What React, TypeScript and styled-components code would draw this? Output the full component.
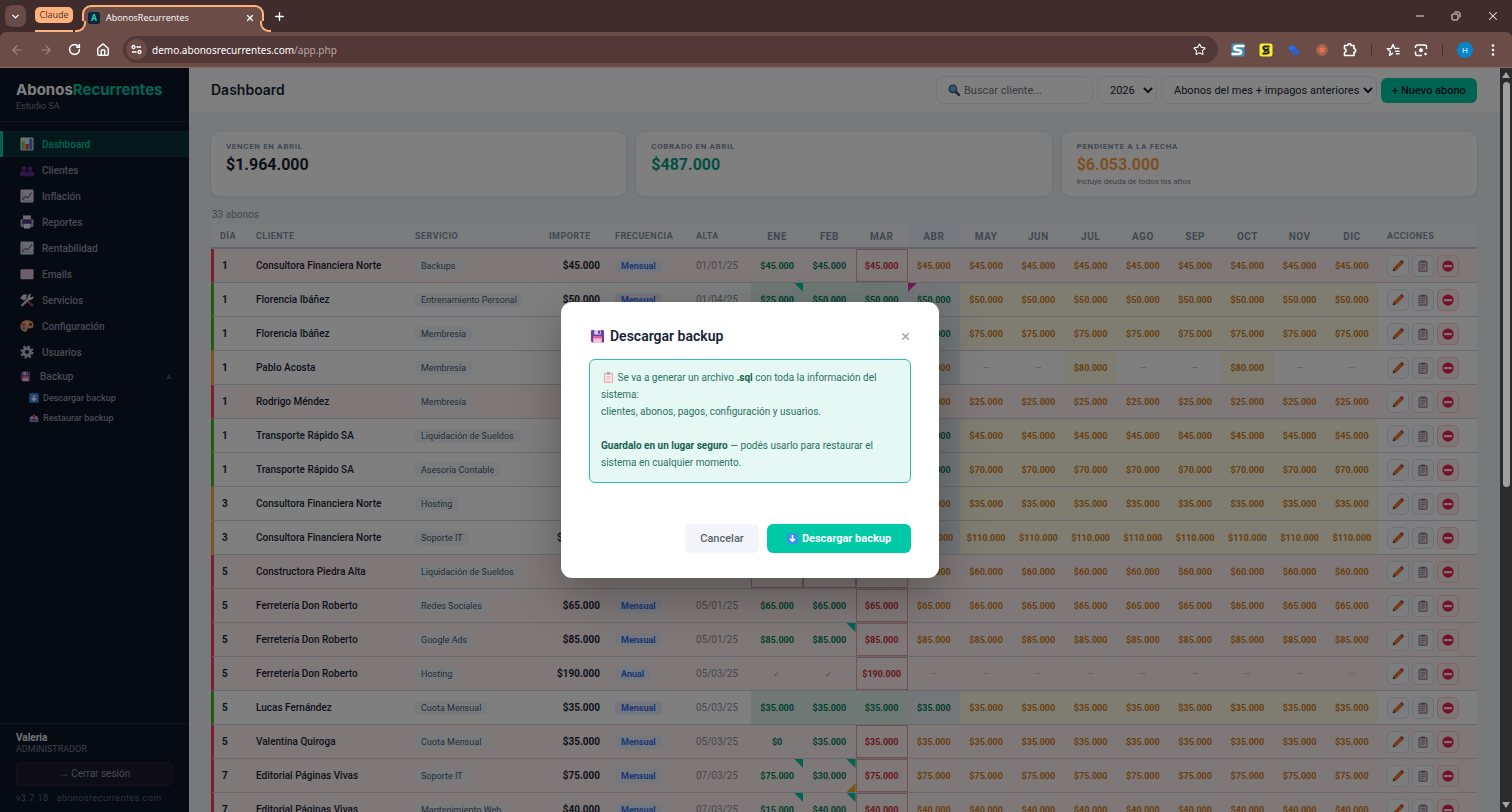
import React from "react";
import styled, { createGlobalStyle, css } from "styled-components";
import {
  ArrowLeft,
  ArrowRight,
  ChevronDown,
  House,
  Minus,
  Plus,
  RotateCw,
  Star,
  X,
} from "lucide-react";

const ui = `Roboto, "Liberation Sans", sans-serif`;
const display = `Inter, "Liberation Sans", sans-serif`;
const chrome = `"Open Sans", "Noto Sans", sans-serif`;

const GlobalStyle = createGlobalStyle`
  * { box-sizing: border-box; }
  body { margin: 0; font-family: ${ui}; font-size: 10px; color: #1a1f36; background: #f0f2f7; }
  button, input, select { font-family: inherit; margin: 0; }
`;

/* ---------- Browser frame ---------- */

const Frame = styled.div`
  height: 100vh;
  display: flex;
  flex-direction: column;
  overflow: hidden;
`;

const TabStrip = styled.div`
  height: 32px;
  flex: none;
  display: flex;
  align-items: center;
  background: #402c2c;
  color: #fff;
  font-family: ${chrome};
  padding-left: 5px;
`;

const TabSearch = styled.button`
  width: 21px;
  height: 22px;
  border: 0;
  border-radius: 7px;
  background: #684a47;
  color: #fff;
  padding: 0;
  display: grid;
  place-items: center;
`;

const TabGroup = styled.div`
  align-self: stretch;
  display: flex;
  align-items: center;
  margin-left: 9px;
  width: 38px;
  border-bottom: 2px solid #ffb27c;
`;

const GroupChip = styled.button`
  height: 16px;
  width: 38px;
  border: 0;
  border-radius: 5px;
  padding: 0;
  background: #ffb27c;
  color: #55332c;
  font-size: 9px;
  line-height: 16px;
`;

const Tab = styled.div`
  position: relative;
  align-self: stretch;
  display: flex;
  align-items: center;
  gap: 6px;
  width: 182px;
  margin: 5px 0 0 9px;
  padding: 0 7px 4px 4px;
  border: 2px solid #ffb27c;
  border-bottom: 0;
  border-radius: 9px 9px 0 0;
  background: #6b4c47;
  font-size: 9px;
  line-height: 14px;

  &::before,
  &::after {
    content: "";
    position: absolute;
    bottom: 0;
    width: 9px;
    height: 9px;
    border-bottom: 2px solid #ffb27c;
    background: #402c2c;
  }
  &::before {
    left: -9px;
    border-right: 2px solid #ffb27c;
    border-bottom-right-radius: 9px;
    box-shadow: 3px 3px 0 #6b4c47;
  }
  &::after {
    right: -9px;
    border-left: 2px solid #ffb27c;
    border-bottom-left-radius: 9px;
    box-shadow: -3px 3px 0 #6b4c47;
  }
`;

const TabTitle = styled.span`
  flex: 1;
`;

const Favicon = styled.span`
  width: 12px;
  height: 12px;
  border-radius: 2px;
  background: #10243c;
  color: #22d3ae;
  font: 700 9px/12px ${ui};
  text-align: center;
`;

const BareButton = styled.button`
  border: 0;
  padding: 0;
  background: none;
  color: inherit;
  display: grid;
  place-items: center;
`;

const NewTab = styled(BareButton)`
  margin-left: 9px;
`;

const WindowButtons = styled.div`
  margin-left: auto;
  display: flex;
  gap: 24px;
  padding-right: 12px;
  color: #f1e4e2;
`;

const ToolbarBack = styled.div`
  background: #402c2c;
  flex: none;
`;

const Toolbar = styled.div`
  height: 36px;
  display: flex;
  align-items: center;
  background: #6b4c47;
  border-bottom: 1px solid #876660;
  border-radius: 6px 6px 0 0;
  color: #fff;
  font-family: ${chrome};
  padding: 0 13px 0 10px;
`;

const NavButtons = styled.div`
  display: flex;
  gap: 15px;
  margin-right: 13px;
`;

const NavButton = styled(BareButton)<{ $muted?: boolean }>`
  color: ${(p) => (p.$muted ? "#a58a86" : "#fff")};
`;

const AddressBar = styled.div`
  flex: 1;
  height: 27px;
  display: flex;
  align-items: center;
  border-radius: 14px;
  background: #523837;
  padding: 0 12px 0 3px;
`;

const SiteInfo = styled(BareButton)`
  width: 21px;
  height: 21px;
  border-radius: 50%;
  background: #6b4c47;
  margin-right: 5px;
`;

const Address = styled.div`
  flex: 1;
  font-family: "Noto Sans", sans-serif;
  font-size: 10px;
  line-height: 16px;
  span { color: #bda9a6; }
`;

const Extensions = styled.div`
  display: flex;
  align-items: center;
  gap: 14px;
  padding-left: 13px;
`;

const Divider = styled.span`
  width: 1px;
  height: 12px;
  background: #4a3230;
`;

const Avatar = styled(BareButton)`
  width: 16px;
  height: 16px;
  border-radius: 50%;
  background: #0a84c8;
  font-size: 8px;
`;

/* ---------- Application shell ---------- */

const Body = styled.div`
  flex: 1;
  min-height: 0;
  display: flex;
`;

const Viewport = styled.div`
  position: relative;
  flex: 1;
  min-width: 0;
  display: flex;
  overflow: hidden;
`;

const ScrollRail = styled.div`
  width: 12px;
  flex: none;
  display: flex;
  flex-direction: column;
  align-items: center;
  background: #2b2b2b;
  padding: 4px 0;
`;

const ScrollThumb = styled.div`
  width: 7px;
  height: 55%;
  margin-top: 4px;
  border-radius: 4px;
  background: #9f9f9f;
`;

const ScrollArrow = styled.span<{ $down?: boolean }>`
  border: 4px solid transparent;
  ${(p) =>
    p.$down
      ? "margin-top: auto; border-top: 6px solid #a5a5a5; border-bottom: 0;"
      : "border-bottom: 6px solid #a5a5a5; border-top: 0;"}
`;

const Sidebar = styled.aside`
  width: 189px;
  flex: none;
  display: flex;
  flex-direction: column;
  background: #0d1627;
  color: #8d97ab;
`;

const Brand = styled.div`
  padding: 13px 16px 9px;
  border-bottom: 1px solid #1d283a;
  height: 54px;
`;

const BrandName = styled.div`
  font: 700 15px/18px ${display};
  color: #fff;
  span { color: #00c9a7; }
`;

const BrandSub = styled.div`
  font-size: 9px;
  line-height: 14px;
  color: #768196;
`;

const Nav = styled.nav`
  flex: 1;
  padding-top: 9px;
`;

const navText = css`
  font-size: 10px;
  font-weight: 500;
  color: inherit;
  text-decoration: none;
`;

const NavLink = styled.a<{ $active?: boolean }>`
  ${navText}
  height: 26px;
  display: flex;
  align-items: center;
  gap: 8px;
  padding-left: 17px;
  border-left: 3px solid ${(p) => (p.$active ? "#00c9a7" : "transparent")};
  ${(p) => p.$active && "background: #0b3138; color: #00c9a7;"}
`;

const NavGroup = styled.button`
  ${navText}
  width: 100%;
  height: 22px;
  border: 0;
  background: none;
  display: flex;
  align-items: center;
  gap: 9px;
  padding: 0 17px 0 20px;
`;

const NavGroupLabel = styled.span`
  flex: 1;
  text-align: left;
`;

const NavCaret = styled.span`
  border: 3px solid transparent;
  border-bottom: 5px solid #3c475b;
  border-top: 0;
`;

const SubNav = styled.div`
  padding: 1px 0 3px 29px;
  background: #0b1322;
`;

const SubLink = styled.a`
  ${navText}
  font-size: 9px;
  height: 20px;
  display: flex;
  align-items: center;
  gap: 4px;
`;

const Account = styled.div`
  border-top: 1px solid #1d283a;
  padding: 8px 16px 7px;
`;

const AccountName = styled.div`
  font-size: 10px;
  line-height: 12px;
  font-weight: 700;
  color: #e4e8f0;
`;

const AccountRole = styled.div`
  font-size: 9px;
  line-height: 11px;
  color: #768196;
`;

const Logout = styled.button`
  width: 100%;
  height: 24px;
  margin: 7px 0 6px;
  border: 1px solid #2a2434;
  border-radius: 5px;
  background: #1c1928;
  color: #8d97ab;
  font-size: 10px;
  line-height: 12px;
`;

const Version = styled.div`
  font-size: 9px;
  line-height: 13px;
  letter-spacing: 0.05em;
  color: #5c667a;
`;

/* ---------- Dashboard ---------- */

const Main = styled.main`
  flex: 1;
  min-width: 0;
  display: flex;
  flex-direction: column;
  background: #f0f2f5;
`;

const TopBar = styled.header`
  height: 45px;
  flex: none;
  display: flex;
  align-items: center;
  gap: 4px;
  padding: 0 23px 0 22px;
  background: #fff;
  border-bottom: 1px solid #f0f2f5;
`;

const PageTitle = styled.h1`
  flex: 1;
  margin: 0;
  font: 600 14px/20px ${display};
`;

const field = css`
  height: 28px;
  border: 1px solid #e9ebf1;
  border-radius: 8px;
  background: #fff;
  color: #1a1f36;
  font-size: 11px;
`;

const Search = styled.label`
  ${field}
  display: flex;
  align-items: center;
  gap: 4px;
  width: 157px;
  padding-left: 11px;
  input {
    border: 0;
    outline: 0;
    padding: 0;
    min-width: 0;
    flex: 1;
    background: none;
    font-size: 11px;
  }
  input::placeholder { color: #757575; opacity: 1; }
`;

const Select = styled.select<{ $wide?: boolean }>`
  ${field}
  width: ${(p) => (p.$wide ? 216 : 60)}px;
  padding-left: 8px;
`;

const Primary = styled.button<{ $large?: boolean }>`
  border: 0;
  background: #00c9a7;
  font-size: 11px;
  border-radius: 6px;
  ${(p) =>
    p.$large
      ? "height: 29px; width: 144px; color: #fff; font-weight: 700; display: flex; align-items: center; justify-content: center; gap: 4px;"
      : "height: 25px; width: 96px; color: #0d1627; font-weight: 500; padding: 0;"}
`;

const Content = styled.div`
  flex: 1;
  min-height: 0;
  overflow: hidden;
  padding: 19px 23px 0 22px;
`;

const Cards = styled.section`
  display: grid;
  grid-template-columns: repeat(3, 1fr);
  gap: 10px;
`;

const Card = styled.div`
  height: 64px;
  padding: 10px 15px;
  border-radius: 9px;
  background: #fff;
  box-shadow: 0 1px 4px rgba(20, 30, 60, 0.08);
`;

const CardLabel = styled.div`
  font-size: 8px;
  line-height: 10px;
  font-weight: 700;
  letter-spacing: 0.08em;
  color: #848ea3;
`;

const CardValue = styled.div<{ $color: string }>`
  margin-top: 3px;
  font-size: 16px;
  line-height: 20px;
  font-weight: 700;
  color: ${(p) => p.$color};
`;

const CardNote = styled.div`
  font-size: 8px;
  line-height: 13px;
  color: #7b8290;
`;

const Count = styled.p`
  margin: 12px 0 3px 1px;
  font-size: 10px;
  line-height: 14px;
  color: #8a8f9c;
`;

const Table = styled.table`
  width: 100%;
  table-layout: fixed;
  border-collapse: separate;
  border-spacing: 0;
  background: #fff;
  border-radius: 8px 8px 0 0;
`;

const Th = styled.th<{ $month?: boolean; $current?: boolean }>`
  height: 24px;
  padding: 0 0 0 9px;
  text-align: left;
  font-size: 9px;
  font-weight: 700;
  letter-spacing: 0.05em;
  color: #848ea3;
  background: #f7f9fb;
  border-bottom: 2px solid #cbcdda;
  &:first-child { border-top-left-radius: 8px; }
  &:last-child { border-top-right-radius: 8px; }
  ${(p) => p.$month && "padding: 0; text-align: center; font-size: 10px;"}
  ${(p) => p.$current && "background: #edf3fd;"}
`;

type Status = "late" | "ok" | "due";
const edge: Record<Status, string> = { late: "#ff3d5e", ok: "#46b81c", due: "#ffa640" };

const Tr = styled.tr<{ $status: Status }>`
  background: ${(p) => (p.$status === "late" ? "#fff0f0" : "#fff")};
  td:first-child { border-left: 3px solid ${(p) => edge[p.$status]}; }
`;

const Td = styled.td`
  height: 34px;
  padding: 0 0 0 9px;
  border-bottom: 1px solid #d0d2da;
  font-size: 10px;
  font-weight: 500;
  white-space: nowrap;
`;

const DayTd = styled(Td)`
  padding-left: 8px;
  font-weight: 700;
`;

const AmountTd = styled(Td)`
  padding: 0 6px 0 0;
  text-align: right;
  font-weight: 700;
`;

const DateTd = styled(Td)`
  font-weight: 400;
  color: #8a8f9c;
`;

type Kind = "paid" | "pending" | "overdue" | "none" | "check";
const monthColor: Record<Kind, string> = {
  paid: "#04805a",
  pending: "#d07f1e",
  overdue: "#cc2f3c",
  none: "#b8bcc6",
  check: "#9aa0ac",
};

const MonthTd = styled(Td)<{ $kind: Kind; $tinted: boolean; $current: boolean }>`
  position: relative;
  padding: 0;
  text-align: center;
  font-size: 9px;
  font-weight: ${(p) => (p.$kind === "none" || p.$kind === "check" ? 400 : 700)};
  color: ${(p) => monthColor[p.$kind]};
  ${(p) => p.$tinted && p.$kind === "paid" && "background: #dcf3ec;"}
  ${(p) => p.$tinted && p.$kind === "pending" && "background: #fff9e2;"}
  ${(p) => p.$tinted && p.$current && "background: #e6eef5;"}
  ${(p) => p.$kind === "overdue" && "box-shadow: inset 0 0 0 1px #e5a3a9;"}
`;

const Corner = styled.span<{ $at: "tr" | "tl" | "br" }>`
  position: absolute;
  width: 9px;
  height: 9px;
  ${(p) =>
    ({
      tr: "top: 0; right: 0; background: #00c9a7; clip-path: polygon(0 0, 100% 0, 100% 100%);",
      tl: "top: 0; left: 0; background: #f02fa0; clip-path: polygon(0 0, 100% 0, 0 100%);",
      br: "bottom: 0; right: 0; background: #f7a823; clip-path: polygon(100% 0, 100% 100%, 0 100%);",
    })[p.$at]}
`;

const Tag = styled.span<{ $blue?: boolean }>`
  display: inline-block;
  padding: 0 6px;
  border-radius: 4px;
  font-size: 9px;
  line-height: 14px;
  background: ${(p) => (p.$blue ? "#e9f0fd" : "#f1f4f8")};
  color: ${(p) => (p.$blue ? "#2f6fed" : "#4c5870")};
  font-weight: ${(p) => (p.$blue ? 700 : 400)};
`;

const Actions = styled.div`
  display: flex;
  gap: 3px;
`;

const IconButton = styled.button<{ $danger?: boolean }>`
  width: 22px;
  height: 22px;
  padding: 0;
  display: grid;
  place-items: center;
  border-radius: 5px;
  border: 1px solid ${(p) => (p.$danger ? "#f6c6ce" : "#dde3ec")};
  background: ${(p) => (p.$danger ? "#fdeef0" : "#f8fafc")};
`;

/* ---------- Backup dialog ---------- */

const Overlay = styled.div`
  position: absolute;
  inset: 0;
  display: grid;
  place-items: center;
  background: rgba(0, 0, 0, 0.5);
`;

const Dialog = styled.div`
  width: 378px;
  padding: 24px 28px 25px;
  border-radius: 11px;
  background: #fff;
  box-shadow: 0 16px 47px rgba(0, 0, 0, 0.3);
`;

const DialogHead = styled.div`
  display: flex;
  align-items: center;
  gap: 5px;
  height: 20px;
  padding-left: 1px;
`;

const DialogTitle = styled.h2`
  flex: 1;
  margin: 0;
  font-size: 14px;
  line-height: 20px;
  font-weight: 600;
`;

const Close = styled(BareButton)`
  width: 11px;
  color: #a5abb6;
`;

const Notice = styled.div`
  margin-top: 13px;
  padding: 9px 11px 11px;
  border: 1px solid #2cc0a4;
  border-radius: 6px;
  background: #e6f8f4;
  color: #2a7262;
  font-size: 10px;
  line-height: 17px;
  svg { vertical-align: -2px; margin: 0 1px 0 2px; }
  strong { color: #17604f; }
`;

const DialogActions = styled.div`
  display: flex;
  justify-content: flex-end;
  gap: 8px;
  margin-top: 41px;
`;

const Cancel = styled.button`
  width: 74px;
  height: 29px;
  border: 0;
  border-radius: 6px;
  background: #f4f5fa;
  color: #5a6072;
  font-size: 11px;
  font-weight: 500;
`;

/* ---------- Pictograms ---------- */

type GlyphName =
  | "bars" | "people" | "trend" | "printer" | "mail" | "tools" | "palette" | "gear"
  | "floppy" | "download" | "outbox" | "pencil" | "clipboard" | "stop" | "lens";

const glyphs: Record<GlyphName, React.ReactNode> = {
  bars: (
    <>
      <rect x="0.5" y="0.5" width="15" height="15" rx="1.5" fill="#e6e0ee" />
      <rect x="2" y="5" width="3.6" height="9.5" fill="#7bc74d" />
      <rect x="6.3" y="8" width="3.6" height="6.5" fill="#e8384f" />
      <rect x="10.6" y="2" width="3.6" height="12.5" fill="#2f7fe0" />
    </>
  ),
  people: (
    <g fill="#5b2f8c">
      <circle cx="4.6" cy="6.5" r="2.7" />
      <circle cx="11.4" cy="6.5" r="2.7" />
      <path d="M0 15v-2.500a3 3 0 0 1 3-3h3a2.600 2.600 0 0 1 2 1 2.600 2.600 0 0 1 2-1h3a3 3 0 0 1 3 3V15z" />
    </g>
  ),
  trend: (
    <>
      <rect x="0.5" y="0.5" width="15" height="15" rx="1.5" fill="#d7d3df" />
      <path d="M3 3v10h10.5" fill="none" stroke="#a6a2b4" strokeWidth="1" />
      <path d="M2.5 12.5l4-4 2.5 1.5 4.5-6" fill="none" stroke="#5e6470" strokeWidth="1.4" />
    </>
  ),
  printer: (
    <>
      <rect x="0.5" y="4.500" width="15" height="9.500" rx="2" fill="#aaa4c4" />
      <rect x="3.5" y="0.5" width="9" height="6" fill="#d9d4ea" />
      <rect x="2.800" y="5" width="10.400" height="5.500" fill="#4c3a86" />
      <rect x="4.500" y="10" width="7" height="5.500" fill="#e9e4f5" />
    </>
  ),
  mail: (
    <>
      <rect x="0.5" y="2.5" width="15" height="11.5" rx="1.2" fill="#dcbfd3" />
      <path d="M1 3.5l7 5 7-5" fill="none" stroke="#d0b0c6" />
    </>
  ),
  tools: (
    <>
      <path d="M6 6l8 8.500" stroke="#8b4a52" strokeWidth="2.800" strokeLinecap="round" />
      <path d="M0.500 5.500L4 1.500l4.500.5L7 4l1 1-3.500 3.500L3 7 1.800 7.500z" fill="#d7d6de" />
      <path d="M2.500 14L11 5.500" stroke="#d0cfd8" strokeWidth="2.800" strokeLinecap="round" />
      <path d="M13 .8a4 4 0 0 0-4 5.200l2.200 2A4 4 0 0 0 15.500 3.500L13 5.500 11.200 3.800z" fill="#dfdee6" />
    </>
  ),
  palette: (
    <>
      <path d="M8 1.500C3.500 1.500.5 4.500.5 8.500s3 6 6 6c2 0 1-2.500 2.500-3.500s6.500 1 6.500-3.500-3-6-7.500-6z" fill="#e39a78" />
      <circle cx="4" cy="6.500" r="1.500" fill="#d23b45" />
      <circle cx="8" cy="4.300" r="1.500" fill="#f3d34a" />
      <circle cx="12" cy="6.500" r="1.600" fill="#3b2a36" />
      <circle cx="4.300" cy="10.500" r="1.500" fill="#3b7bd6" />
    </>
  ),
  gear: (
    <>
      <circle cx="8" cy="8" r="6.300" fill="none" stroke="#bfbcca" strokeWidth="2.600" strokeDasharray="2.600 2.340" />
      <circle cx="8" cy="8" r="4" fill="none" stroke="#bfbcca" strokeWidth="3.200" />
    </>
  ),
  floppy: (
    <>
      <path d="M1 2.500A1.500 1.500 0 0 1 2.500 1h11A1.500 1.500 0 0 1 15 2.500v12H2.500L1 13z" fill="#6b3fa0" />
      <rect x="4.500" y="1" width="7" height="5" fill="#d9c9ee" />
      <rect x="8.700" y="1.800" width="1.800" height="3.200" fill="#4a2a78" />
      <rect x="3.500" y="8" width="9" height="7" fill="#fbc3d8" />
      <rect x="3.500" y="8" width="9" height="2" fill="#e35a94" />
    </>
  ),
  download: (
    <>
      <rect x="0.500" y="0.500" width="15" height="15" rx="2" fill="#3f8ff0" />
      <path d="M8 3v9M4.500 8.500L8 12l3.500-3.500" fill="none" stroke="#fff" strokeWidth="2.200" />
    </>
  ),
  outbox: (
    <>
      <path d="M1 8h14v6.500H1z" fill="#8a86c8" />
      <path d="M3 5h10l2 4H1z" fill="#c9c5e6" />
      <path d="M8 1l3.500 4H9.500v4h-3V5h-2z" fill="#d8434f" />
      <path d="M4.500 10h7v2h-7z" fill="#4d4796" />
    </>
  ),
  pencil: (
    <>
      <path d="M1 15l1.200-4.800L10.500 2l3.500 3.500L5.800 13.800z" fill="#e8782c" />
      <path d="M10.500 2l1.400-1.400a1.500 1.500 0 0 1 2.100 0l1.400 1.400a1.500 1.500 0 0 1 0 2.100L14 5.500z" fill="#cf4558" />
      <path d="M1 15l.9-3.600 2.700 2.700z" fill="#5e3a2c" />
    </>
  ),
  clipboard: (
    <>
      <rect x="2" y="1.500" width="12" height="14" rx="1" fill="#a57f8b" />
      <rect x="3.500" y="3" width="9" height="11" fill="#ded5e2" />
      <rect x="5" y="0.500" width="6" height="3" rx="0.800" fill="#7d7d90" />
      <path d="M5 6h6M5 8.500h6M5 11h4" stroke="#8d84a0" strokeWidth="1.200" />
    </>
  ),
  stop: (
    <>
      <circle cx="8" cy="8" r="7.500" fill="#ee1f4f" />
      <rect x="2.700" y="6.500" width="10.600" height="3" rx="0.600" fill="#f4ecf2" />
    </>
  ),
  lens: (
    <>
      <path d="M9.500 9.500l5 5" stroke="#3b4154" strokeWidth="3" strokeLinecap="round" />
      <circle cx="6.500" cy="6.500" r="5" fill="#4fb4e6" stroke="#4d5568" strokeWidth="1.600" />
    </>
  ),
};

const Glyph = ({ name, size = 13 }: { name: GlyphName; size?: number }) => (
  <svg width={size} height={size} viewBox="0 0 16 16" aria-hidden="true">
    {glyphs[name]}
  </svg>
);

const PinkClipboard = () => (
  <svg width="11" height="11" viewBox="0 0 16 16" aria-hidden="true">
    <rect x="1.500" y="1.500" width="13" height="14" rx="1" fill="#eaa7a4" />
    <rect x="3" y="3" width="10" height="11" fill="#fbe9ec" />
    <rect x="5" y="0.500" width="6" height="3" rx="0.800" fill="#b59aa8" />
    <path d="M5 6.500h6M5 9h6M5 11.500h4" stroke="#d9a5b4" />
  </svg>
);

const ExtIcons = () => (
  <>
    <svg width="14" height="14" viewBox="0 0 14 14" aria-hidden="true">
      <rect x="0.500" y="0.500" width="13" height="13" rx="1" fill="#3f8fb8" />
      <path d="M13.500 3H6Q3.500 3 3.500 5T6.500 7t3.500 2-2.500 2H.5" fill="none" stroke="#fff" strokeWidth="2.600" />
    </svg>
    <svg width="14" height="14" viewBox="0 0 14 14" aria-hidden="true">
      <rect x="0.500" y="0.500" width="13" height="13" rx="2" fill="#f7ea2e" />
      <path d="M10.500 3.500H6Q3.500 3.700 4.500 5.700l5 2.400Q10.500 10.300 8 10.500H3.500M5 8.500l5-3" fill="none" stroke="#1c1c10" strokeWidth="1.800" />
    </svg>
    <svg width="14" height="14" viewBox="0 0 14 14" aria-hidden="true">
      <path d="M2 4l3.500-2.500L9 4.500v3l-3 1.500-4-2z" fill="#2f6be0" />
      <path d="M5.500 6.500L9 5l3.500 3-2 4-4 .3-2-3z" fill="#2a5fce" />
    </svg>
    <svg width="14" height="14" viewBox="0 0 14 14" aria-hidden="true">
      <path
        d="M7 1v12M1 7h12M2.700 2.700l8.600 8.600M11.300 2.700l-8.600 8.600M4.700 1.500l4.600 11M9.300 1.500l-4.600 11M1.500 4.700l11 4.600M1.500 9.300l11-4.600"
        stroke="#e07a50"
        strokeWidth="1"
      />
    </svg>
  </>
);

/* ---------- Data ---------- */

const MONTHS = ["ENE", "FEB", "MAR", "ABR", "MAY", "JUN", "JUL", "AGO", "SEP", "OCT", "NOV", "DIC"];
const CURRENT = 3;

interface Row {
  day: number;
  client: string;
  service: string;
  amount: string;
  freq: string;
  since: string;
  status: Status;
  /* One letter per month: p paid, y pending, r overdue, n none, c covered */
  plan: string;
  override?: Record<number, string>;
  corners?: [number, "tr" | "tl" | "br"][];
}

const row = (
  day: number, client: string, service: string, amount: string, since: string,
  status: Status, plan: string, extra: Partial<Row> = {},
): Row => ({ day, client, service, amount, since, status, plan, freq: "Mensual", ...extra });

const LATE = "ppryyyyyyyyy";
const OK = "ppppyyyyyyyy";
const DUE = "pppyyyyyyyyy";

const ROWS: Row[] = [
  row(1, "Consultora Financiera Norte", "Backups", "$45.000", "01/01/25", "late", LATE),
  row(1, "Florencia Ibáñez", "Entrenamiento Personal", "$50.000", "01/04/25", "ok", OK, {
    override: { 0: "$25.000" },
    corners: [[0, "tr"], [3, "tl"]],
  }),
  row(1, "Florencia Ibáñez", "Membresía", "$75.000", "01/04/25", "ok", OK),
  row(1, "Pablo Acosta", "Membresía", "$80.000", "01/01/25", "due", "pnnynnynnynn", { freq: "Trimestral" }),
  row(1, "Rodrigo Méndez", "Membresía", "$25.000", "01/01/25", "late", LATE),
  row(1, "Transporte Rápido SA", "Liquidación de Sueldos", "$45.000", "01/01/25", "ok", OK),
  row(1, "Transporte Rápido SA", "Asesoría Contable", "$70.000", "01/01/25", "ok", OK),
  row(3, "Consultora Financiera Norte", "Hosting", "$35.000", "03/01/25", "due", DUE),
  row(3, "Consultora Financiera Norte", "Soporte IT", "$110.000", "03/01/25", "due", DUE),
  row(5, "Constructora Piedra Alta", "Liquidación de Sueldos", "$60.000", "05/01/25", "late", "rrryyyyyyyyy"),
  row(5, "Ferretería Don Roberto", "Redes Sociales", "$65.000", "05/01/25", "late", LATE),
  row(5, "Ferretería Don Roberto", "Google Ads", "$85.000", "05/01/25", "late", LATE, { corners: [[1, "tr"]] }),
  row(5, "Ferretería Don Roberto", "Hosting", "$190.000", "05/03/25", "late", "ccrnnnnnnnnn", { freq: "Anual" }),
  row(5, "Lucas Fernández", "Cuota Mensual", "$35.000", "05/03/25", "ok", OK),
  row(5, "Valentina Quiroga", "Cuota Mensual", "$35.000", "05/03/25", "late", LATE, { override: { 0: "$0" } }),
  row(7, "Editorial Páginas Vivas", "Soporte IT", "$75.000", "07/03/25", "late", LATE, {
    override: { 1: "$30.000" },
    corners: [[0, "tr"], [1, "tr"], [1, "br"]],
  }),
  row(7, "Editorial Páginas Vivas", "Mantenimiento Web", "$40.000", "07/03/25", "late", LATE, {
    override: { 0: "$15.000" },
    corners: [[0, "tr"], [1, "tr"]],
  }),
];

const KINDS: Record<string, Kind> = { p: "paid", y: "pending", r: "overdue", n: "none", c: "check" };

const NAV: [GlyphName, string][] = [
  ["bars", "Dashboard"],
  ["people", "Clientes"],
  ["trend", "Inflación"],
  ["printer", "Reportes"],
  ["trend", "Rentabilidad"],
  ["mail", "Emails"],
  ["tools", "Servicios"],
  ["palette", "Configuración"],
  ["gear", "Usuarios"],
];

/* ---------- Sections ---------- */

const BrowserTop = () => (
  <>
    <TabStrip>
      <TabSearch aria-label="Buscar pestañas"><ChevronDown size={11} strokeWidth={3} /></TabSearch>
      <TabGroup><GroupChip>Claude</GroupChip></TabGroup>
      <Tab>
        <Favicon>A</Favicon>
        <TabTitle>AbonosRecurrentes</TabTitle>
        <BareButton aria-label="Cerrar pestaña"><X size={10} strokeWidth={3} /></BareButton>
      </Tab>
      <NewTab aria-label="Nueva pestaña"><Plus size={13} strokeWidth={2.5} /></NewTab>
      <WindowButtons>
        <BareButton aria-label="Minimizar"><Minus size={12} /></BareButton>
        <BareButton aria-label="Restaurar">
          <svg width="12" height="12" viewBox="0 0 12 12" fill="none" stroke="currentColor" aria-hidden="true">
            <rect x="2" y="4" width="6" height="6" rx="1" />
            <path d="M4.500 2h4A1.500 1.500 0 0 1 10 3.500v4" />
          </svg>
        </BareButton>
        <BareButton aria-label="Cerrar"><X size={14} strokeWidth={1.8} /></BareButton>
      </WindowButtons>
    </TabStrip>
    <ToolbarBack>
      <Toolbar>
        <NavButtons>
          <NavButton $muted aria-label="Atrás"><ArrowLeft size={14} /></NavButton>
          <NavButton $muted aria-label="Adelante"><ArrowRight size={14} /></NavButton>
          <NavButton aria-label="Recargar"><RotateCw size={13} strokeWidth={2.8} /></NavButton>
          <NavButton aria-label="Inicio"><House size={14} strokeWidth={2.5} /></NavButton>
        </NavButtons>
        <AddressBar>
          <SiteInfo aria-label="Información del sitio">
            <svg width="11" height="11" viewBox="0 0 11 11" fill="none" stroke="#fff" strokeWidth="1.300" aria-hidden="true">
              <circle cx="2.500" cy="3" r="1.500" />
              <path d="M5.500 3H10M1 8h4.500" />
              <circle cx="8.500" cy="8" r="1.500" />
            </svg>
          </SiteInfo>
          <Address>demo.abonosrecurrentes.com<span>/app.php</span></Address>
          <BareButton aria-label="Agregar a favoritos"><Star size={13} /></BareButton>
        </AddressBar>
        <Extensions>
          <ExtIcons />
          <svg width="14" height="14" viewBox="0 0 14 14" fill="none" stroke="#fff" strokeWidth="1.600" strokeLinejoin="round" aria-hidden="true">
            <path d="M1.500 2.500h3.200a1.700 1.700 0 0 1 3.400 0h2.900v3.200a1.700 1.700 0 0 1 0 3.400v3.400H1.500V9.200a1.700 1.700 0 0 0 0-3.400z" />
          </svg>
          <Divider />
          <svg width="14" height="14" viewBox="0 0 14 14" fill="none" stroke="#fff" strokeWidth="1.400" strokeLinejoin="round" aria-hidden="true">
            <path d="M7 10L3.500 12.500l1-4L1.200 5.700l4.100-.3L7 1.500l1.700 3.900h4.600M9 8.200h4.500M10 10.800h3.500" />
          </svg>
          <svg width="14" height="14" viewBox="0 0 14 14" fill="none" stroke="#fff" strokeWidth="1.500" aria-hidden="true">
            <path d="M1.500 5V4a2 2 0 0 1 2-2h7a2 2 0 0 1 2 2v2M1.500 8.500v2a2 2 0 0 0 2 2H8" />
            <circle cx="7" cy="7.200" r="2" fill="#fff" stroke="none" />
            <circle cx="11.500" cy="11" r="1.300" fill="#fff" stroke="none" />
          </svg>
          <Divider />
          <Avatar aria-label="Perfil">H</Avatar>
          <svg width="12" height="12" viewBox="0 0 12 12" fill="#fff" aria-hidden="true">
            <circle cx="6" cy="1.500" r="1.300" />
            <circle cx="6" cy="6" r="1.300" />
            <circle cx="6" cy="10.500" r="1.300" />
          </svg>
        </Extensions>
      </Toolbar>
    </ToolbarBack>
  </>
);

const SideMenu = () => (
  <Sidebar>
    <Brand>
      <BrandName>Abonos<span>Recurrentes</span></BrandName>
      <BrandSub>Estudio SA</BrandSub>
    </Brand>
    <Nav>
      {NAV.map(([icon, label], i) => (
        <NavLink key={label} href="#" $active={i === 0}>
          <Glyph name={icon} size={14} />
          {label}
        </NavLink>
      ))}
      <NavGroup>
        <Glyph name="floppy" size={11} />
        <NavGroupLabel>Backup</NavGroupLabel>
        <NavCaret />
      </NavGroup>
      <SubNav>
        <SubLink href="#"><Glyph name="download" size={10} />Descargar backup</SubLink>
        <SubLink href="#"><Glyph name="outbox" size={10} />Restaurar backup</SubLink>
      </SubNav>
    </Nav>
    <Account>
      <AccountName>Valeria</AccountName>
      <AccountRole>ADMINISTRADOR</AccountRole>
      <Logout>→ Cerrar sesión</Logout>
      <Version>v3.7.18 · abonosrecurrentes.com</Version>
    </Account>
  </Sidebar>
);

const SubscriptionRow = ({ data }: { data: Row }) => (
  <Tr $status={data.status}>
    <DayTd>{data.day}</DayTd>
    <Td>{data.client}</Td>
    <Td><Tag>{data.service}</Tag></Td>
    <AmountTd>{data.amount}</AmountTd>
    <Td><Tag $blue>{data.freq}</Tag></Td>
    <DateTd>{data.since}</DateTd>
    {MONTHS.map((m, i) => {
      const kind = KINDS[data.plan[i]];
      const text = kind === "none" ? "—" : kind === "check" ? "✓" : data.override?.[i] ?? data.amount;
      return (
        <MonthTd key={m} $kind={kind} $tinted={data.status !== "late"} $current={i === CURRENT}>
          {text}
          {data.corners?.filter(([c]) => c === i).map(([, at]) => <Corner key={at} $at={at} />)}
        </MonthTd>
      );
    })}
    <Td>
      <Actions>
        <IconButton aria-label="Editar"><Glyph name="pencil" size={12} /></IconButton>
        <IconButton aria-label="Detalle"><Glyph name="clipboard" size={12} /></IconButton>
        <IconButton $danger aria-label="Dar de baja"><Glyph name="stop" size={12} /></IconButton>
      </Actions>
    </Td>
  </Tr>
);

const COLS = [36, 159, 134, 66, 81, 64];

const Dashboard = () => (
  <Main>
    <TopBar>
      <PageTitle>Dashboard</PageTitle>
      <Search>
        <Glyph name="lens" size={12} />
        <input aria-label="Buscar cliente" placeholder="Buscar cliente..." />
      </Search>
      <Select aria-label="Año"><option>2026</option></Select>
      <Select $wide aria-label="Filtro"><option>Abonos del mes + impagos anteriores</option></Select>
      <Primary>+ Nuevo abono</Primary>
    </TopBar>
    <Content>
      <Cards>
        <Card>
          <CardLabel>VENCEN EN ABRIL</CardLabel>
          <CardValue $color="#1a1f36">$1.964.000</CardValue>
        </Card>
        <Card>
          <CardLabel>COBRADO EN ABRIL</CardLabel>
          <CardValue $color="#05a07f">$487.000</CardValue>
        </Card>
        <Card>
          <CardLabel>PENDIENTE A LA FECHA</CardLabel>
          <CardValue $color="#ff9f43">$6.053.000</CardValue>
          <CardNote>Incluye deuda de todos los años</CardNote>
        </Card>
      </Cards>
      <Count>33 abonos</Count>
      <Table>
        <colgroup>
          {COLS.map((w, i) => <col key={i} width={w} />)}
          {MONTHS.map((m) => <col key={m} />)}
          <col width={99} />
        </colgroup>
        <thead>
          <tr>
            {["DÍA", "CLIENTE", "SERVICIO", "IMPORTE", "FRECUENCIA", "ALTA"].map((h) => <Th key={h}>{h}</Th>)}
            {MONTHS.map((m, i) => <Th key={m} $month $current={i === CURRENT}>{m}</Th>)}
            <Th>ACCIONES</Th>
          </tr>
        </thead>
        <tbody>
          {ROWS.map((r, i) => <SubscriptionRow key={i} data={r} />)}
        </tbody>
      </Table>
    </Content>
  </Main>
);

const BackupDialog = () => (
  <Overlay>
    <Dialog role="dialog" aria-labelledby="backup-title">
      <DialogHead>
        <Glyph name="floppy" size={15} />
        <DialogTitle id="backup-title">Descargar backup</DialogTitle>
        <Close aria-label="Cerrar"><X size={11} strokeWidth={3.5} /></Close>
      </DialogHead>
      <Notice>
        <PinkClipboard /> Se va a generar un archivo <strong>.sql</strong> con toda la información del sistema:
        <br />
        clientes, abonos, pagos, configuración y usuarios.
        <br />
        <br />
        <strong>Guardalo en un lugar seguro</strong> — podés usarlo para restaurar el sistema en cualquier momento.
      </Notice>
      <DialogActions>
        <Cancel>Cancelar</Cancel>
        <Primary $large><Glyph name="download" size={11} />Descargar backup</Primary>
      </DialogActions>
    </Dialog>
  </Overlay>
);

export default function App() {
  return (
    <Frame>
      <GlobalStyle />
      <BrowserTop />
      <Body>
        <Viewport>
          <SideMenu />
          <Dashboard />
          <BackupDialog />
        </Viewport>
        <ScrollRail>
          <ScrollArrow />
          <ScrollThumb />
          <ScrollArrow $down />
        </ScrollRail>
      </Body>
    </Frame>
  );
}
